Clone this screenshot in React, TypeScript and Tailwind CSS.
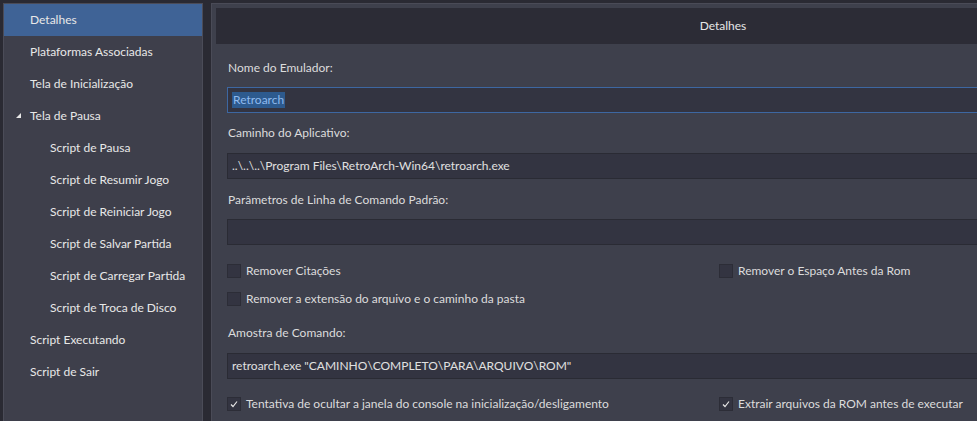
import React from "react";

const font = { fontFamily: "Lato, 'Noto Sans', sans-serif" };

function Tri() {
  return (
    <svg width="6" height="6" viewBox="0 0 6 6" className="block">
      <polygon points="0,5 5,5 5,0" fill="#e8e8e8" />
    </svg>
  );
}

function Check({ checked }: { checked?: boolean }) {
  return (
    <div className="w-[14px] h-[14px] bg-[#333441] border border-[#2c2d37] flex items-center justify-center shrink-0">
      {checked && (
        <svg width="8" height="8" viewBox="0 0 8 8">
          <polyline points="1,4.5 3,6.5 7,1.5" fill="none" stroke="#e6e6e6" strokeWidth="1.2" />
        </svg>
      )}
    </div>
  );
}

const items: { label: string; level: number; selected?: boolean; arrow?: boolean }[] = [
  { label: "Detalhes", level: 0, selected: true },
  { label: "Plataformas Associadas", level: 0 },
  { label: "Tela de Inicialização", level: 0 },
  { label: "Tela de Pausa", level: 0, arrow: true },
  { label: "Script de Pausa", level: 1 },
  { label: "Script de Resumir Jogo", level: 1 },
  { label: "Script de Reiniciar Jogo", level: 1 },
  { label: "Script de Salvar Partida", level: 1 },
  { label: "Script de Carregar Partida", level: 1 },
  { label: "Script de Troca de Disco", level: 1 },
  { label: "Script Executando", level: 0 },
  { label: "Script de Sair", level: 0 },
];

function Label({ children }: { children: React.ReactNode }) {
  return <div className="h-[20px] flex items-center text-[#dcdcdc] pl-[1px]">{children}</div>;
}

function Field({ children, focused }: { children?: React.ReactNode; focused?: boolean }) {
  return (
    <div
      className={
        "h-[26px] flex items-center px-[4px] bg-[#333441] border " +
        (focused ? "border-[#3d67a1]" : "border-[#2a2b34]")
      }
    >
      {children}
    </div>
  );
}

function CheckItem({ checked, children }: { checked?: boolean; children: React.ReactNode }) {
  return (
    <div className="flex items-center gap-[5px] h-[14px]">
      <Check checked={checked} />
      <span className="text-[#dcdcdc] whitespace-nowrap">{children}</span>
    </div>
  );
}

export default function App() {
  return (
    <div
      className="w-[977px] h-[421px] overflow-hidden bg-[#2a2a33] flex pt-[3px] pl-[3px] text-[12px] leading-none"
      style={font}
    >
      <div className="w-[200px] shrink-0 h-[430px] bg-[#3e3f4b] border border-[#4b4c58] border-b-0 flex flex-col">
        {items.map((it) => (
          <div
            key={it.label}
            className={
              "h-[32px] shrink-0 flex items-center text-[#e8e8e8] whitespace-nowrap " +
              (it.selected ? "bg-[#3f6396]" : "")
            }
          >
            <div className="w-[26px] shrink-0 flex justify-end pr-[8px]">{it.arrow && <Tri />}</div>
            {it.level === 1 && <div className="w-[20px] shrink-0" />}
            <span>{it.label}</span>
          </div>
        ))}
      </div>
      <div className="w-[8px] shrink-0" />
      <div className="w-[1020px] shrink-0 h-[430px] bg-[#3e404c] border border-[#4a4b57] border-b-0 pt-[4px] pl-[4px]">
        <div className="h-[36px] bg-[#2c2c36] flex items-center justify-center text-[#e6e6e6]">Detalhes</div>
        <div className="pl-[11px] pt-[14px] flex flex-col">
          <Label>Nome do Emulador:</Label>
          <div className="mt-[9px]">
            <Field focused>
              <span className="bg-[#2d5a8e] text-[#8fbbef] px-[1px] py-[2px]">Retroarch</span>
            </Field>
          </div>
          <div className="mt-[10px]">
            <Label>Caminho do Aplicativo:</Label>
          </div>
          <div className="mt-[10px]">
            <Field>
              <span className="text-[#e0e0e0]">..\..\..\Program Files\RetroArch-Win64\retroarch.exe</span>
            </Field>
          </div>
          <div className="mt-[11px]">
            <Label>Parâmetros de Linha de Comando Padrão:</Label>
          </div>
          <div className="mt-[9px]">
            <Field />
          </div>
          <div className="mt-[19px] flex">
            <div className="w-[492px]">
              <CheckItem>Remover Citações</CheckItem>
            </div>
            <CheckItem>Remover o Espaço Antes da Rom</CheckItem>
          </div>
          <div className="mt-[14px]">
            <CheckItem>Remover a extensão do arquivo e o caminho da pasta</CheckItem>
          </div>
          <div className="mt-[17px]">
            <Label>Amostra de Comando:</Label>
          </div>
          <div className="mt-[10px]">
            <Field>
              <span className="text-[#e0e0e0]">retroarch.exe "CAMINHO\COMPLETO\PARA\ARQUIVO\ROM"</span>
            </Field>
          </div>
          <div className="mt-[18px] flex">
            <div className="w-[492px]">
              <CheckItem checked>Tentativa de ocultar a janela do console na inicialização/desligamento</CheckItem>
            </div>
            <CheckItem checked>Extrair arquivos da ROM antes de executar</CheckItem>
          </div>
        </div>
      </div>
    </div>
  );
}
